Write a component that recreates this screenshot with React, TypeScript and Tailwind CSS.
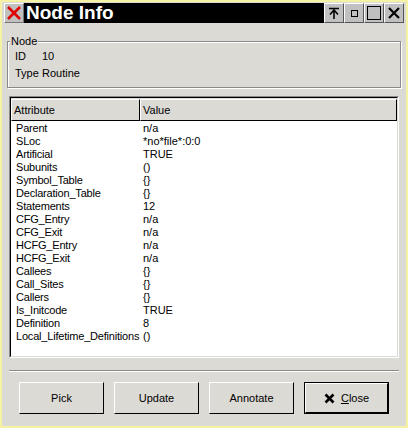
const rows: [string, string][] = [
  ["Parent", "n/a"],
  ["SLoc", "*no*file*:0:0"],
  ["Artificial", "TRUE"],
  ["Subunits", "()"],
  ["Symbol_Table", "{}"],
  ["Declaration_Table", "{}"],
  ["Statements", "12"],
  ["CFG_Entry", "n/a"],
  ["CFG_Exit", "n/a"],
  ["HCFG_Entry", "n/a"],
  ["HCFG_Exit", "n/a"],
  ["Callees", "{}"],
  ["Call_Sites", "{}"],
  ["Callers", "{}"],
  ["Is_Initcode", "TRUE"],
  ["Definition", "8"],
  ["Local_Lifetime_Definitions", "()"],
];

const raised =
  "border border-t-white border-l-white border-b-black border-r-black bg-[#dcdad5]";

function TitleButton({ children }: { children: React.ReactNode }) {
  return (
    <div className="w-[20px] h-[20px] bg-[#c0c0c0] border border-t-white border-l-white border-b-[#555] border-r-[#555] flex items-center justify-center">
      {children}
    </div>
  );
}

function Button({ label, primary }: { label: React.ReactNode; primary?: boolean }) {
  return (
    <div className={`w-[85px] h-[32px] ${primary ? "border border-black" : ""}`}>
      <div className="w-full h-full flex items-center justify-center gap-[6px] border border-t-white border-l-white border-b-black border-r-black bg-[#dcdad5] text-[11px] text-black">
        {label}
      </div>
    </div>
  );
}

export default function App() {
  return (
    <div
      className="w-[408px] h-[428px] bg-[#f6f2a4] p-[2px] overflow-hidden"
      style={{ fontFamily: '"Liberation Sans", Arial, sans-serif' }}
    >
      <div className="w-full h-full bg-[#dcdad5] flex flex-col px-[2px] pt-[1px]">
        {/* title bar */}
        <div className="flex h-[20px]">
          <div className="w-[20px] h-[20px] bg-[#c0c0c0] border border-t-white border-l-white border-b-[#777] border-r-[#777] flex items-center justify-center">
            <svg width="16" height="16" viewBox="0 0 16 16">
              <path d="M2 2 L14 14 M14 2 L2 14" stroke="#e00000" strokeWidth="2.6" />
            </svg>
          </div>
          <div className="flex-1 bg-black text-white font-bold text-[19px] leading-[20px] pl-[2px]">
            Node Info
          </div>
          <TitleButton>
            <svg width="14" height="14" viewBox="0 0 14 14">
              <path d="M2 2.5 H12 M7 4 V13 M3 8.5 L7 4 L11 8.5" stroke="black" strokeWidth="1.6" fill="none" />
            </svg>
          </TitleButton>
          <TitleButton>
            <div className="w-[7px] h-[7px] border-[1.5px] border-black" />
          </TitleButton>
          <TitleButton>
            <div className="w-[14px] h-[14px] border border-black" />
          </TitleButton>
          <TitleButton>
            <svg width="14" height="14" viewBox="0 0 14 14">
              <path d="M2 2 L12 12 M12 2 L2 12" stroke="black" strokeWidth="2.2" />
            </svg>
          </TitleButton>
        </div>

        {/* node group */}
        <div className="relative mt-[18px] mx-[3px] h-[47px] border border-[#8a8a8a] shadow-[1px_1px_0_white,inset_1px_1px_0_white] text-[11px] text-black">
          <span className="absolute -top-[8px] left-[2px] bg-[#dcdad5] px-[1px] leading-[14px]">Node</span>
          <div className="pt-[8px] pl-[7px] flex flex-col gap-[4px] leading-[13px]">
            <div className="flex">
              <span className="w-[27px]">ID</span>
              <span>10</span>
            </div>
            <div className="flex">
              <span className="w-[27px]">Type</span>
              <span>Routine</span>
            </div>
          </div>
        </div>

        {/* table */}
        <div className="mt-[8px] mx-[5px] h-[262px] border border-t-[#8a8a8a] border-l-[#8a8a8a] border-b-white border-r-white">
          <div className="w-full h-full border border-t-black border-l-black border-b-[#dcdad5] border-r-[#dcdad5] bg-white flex flex-col">
            <div className="flex h-[23px] text-[11px] text-black leading-[21px] border-t border-t-[#dcdad5]">
              <div className={`w-[129px] ${raised} pl-[2px]`}>Attribute</div>
              <div className={`flex-1 ${raised} pl-[2px]`}>Value</div>
            </div>
            <div className="pt-[1px] text-[11px] leading-[13px] text-black">
              {rows.map(([k, v]) => (
                <div key={k} className="flex">
                  <span className="w-[132px] pl-[5px] tracking-[-0.2px] whitespace-nowrap">{k}</span>
                  <span>{v}</span>
                </div>
              ))}
            </div>
          </div>
        </div>

        {/* separator */}
        <div className="mt-[12px] mx-[5px] h-[2px] border-t border-t-[#8a8a8a] border-b border-b-white" />

        {/* buttons */}
        <div className="mt-[10px] pl-[15px] flex gap-[10px]">
          <Button label="Pick" />
          <Button label="Update" />
          <Button label="Annotate" />
          <Button
            primary
            label={
              <>
                <svg width="11" height="11" viewBox="0 0 11 11">
                  <path d="M1.5 1.5 L9.5 9.5 M9.5 1.5 L1.5 9.5" stroke="black" strokeWidth="2.6" />
                </svg>
                <span>
                  <span className="underline">C</span>lose
                </span>
              </>
            }
          />
        </div>
      </div>
    </div>
  );
}
